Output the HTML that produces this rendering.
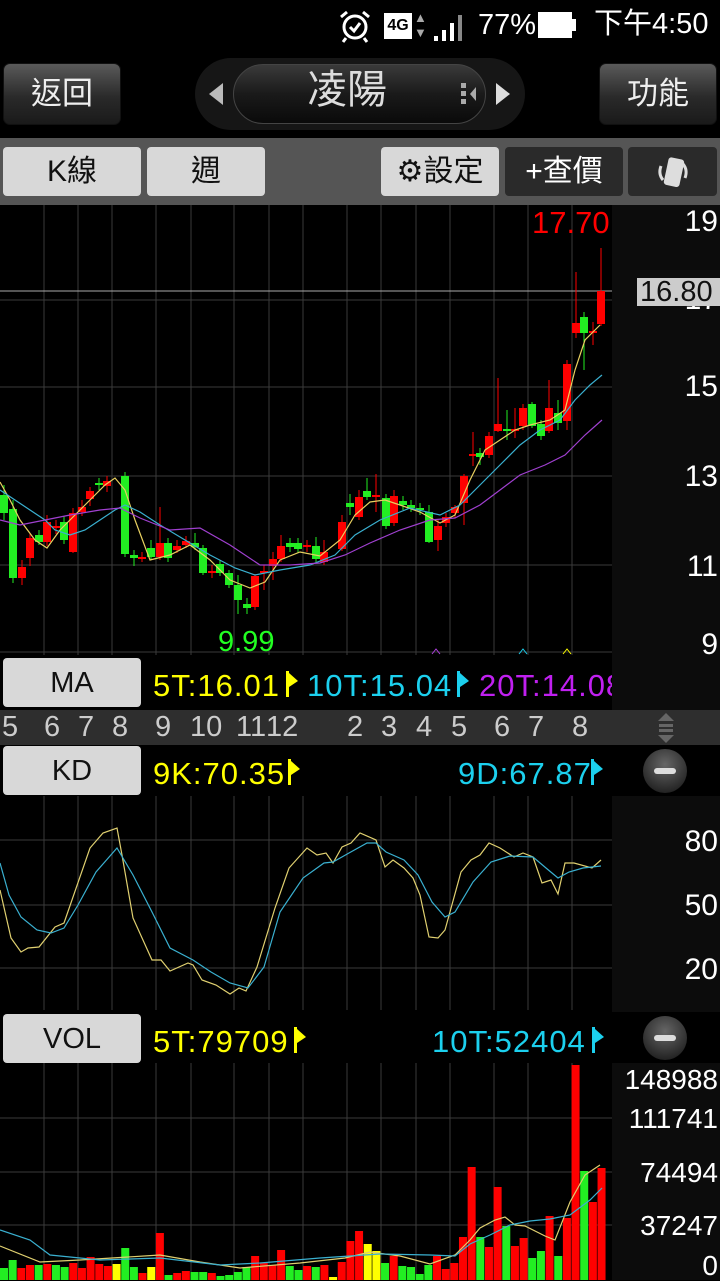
<!DOCTYPE html>
<html><head><meta charset="utf-8">
<style>
*{margin:0;padding:0;box-sizing:border-box}
body{width:720px;height:1280px;background:#000;position:relative;overflow:hidden;font-family:"Liberation Sans","Noto Sans CJK TC",sans-serif;color:#fff}
.abs{position:absolute}
.hbtn{position:absolute;top:63px;height:62px;width:118px;border-radius:7px;background:linear-gradient(#5a5a5a,#2a2a2a 55%,#1a1a1a);border:1px solid #111;color:#eee;font-size:31px;text-align:center;line-height:60px}
.tb{position:absolute;top:147px;height:49px;border-radius:4px;font-size:30px;text-align:center;line-height:49px}
.lt{background:#d8d8d8;color:#111}
.dk{background:#2a2a2a;color:#fff}
.lbl{position:absolute;left:3px;width:138px;height:49px;border-radius:4px;background:#d8d8d8;color:#111;font-size:29px;text-align:center;line-height:50px}
.t{position:absolute;font-size:31px;letter-spacing:1px;white-space:nowrap;line-height:1}
.ax{position:absolute;right:2px;font-size:30px;color:#fff;text-align:right;line-height:1}
.minus{position:absolute;left:643px;width:44px;height:44px;border-radius:50%;background:radial-gradient(circle at 50% 35%,#666,#2a2a2a 70%,#111)}
.minus:after{content:"";position:absolute;left:11px;top:19px;width:22px;height:6px;border-radius:3px;background:#ddd}
.flag{position:absolute;width:14px;height:26px}
</style></head><body>
<!-- status bar -->
<div class="abs" style="left:337px;top:8px;width:36px;height:36px">
<svg width="36" height="36" viewBox="0 0 36 36" fill="none" stroke="#fff" stroke-width="3"><circle cx="18" cy="19" r="11"/><path d="M13 19l4 4 6-8"/><path d="M4 9l6-5M32 9l-6-5M9 30l-3 4M27 30l3 4"/></svg></div>
<div class="abs" style="left:384px;top:13px;width:28px;height:26px;background:#fff;color:#000;font-size:16px;font-weight:bold;text-align:center;line-height:26px">4G</div>
<div class="abs" style="left:414px;top:10px;font-size:13px;color:#aaa;line-height:15px">▲<br>▼</div>
<svg class="abs" style="left:432px;top:12px" width="36" height="30"><rect x="2" y="24" width="4" height="5" fill="#fff"/><rect x="10" y="18" width="4" height="11" fill="#fff"/><rect x="18" y="11" width="4" height="18" fill="#fff"/><rect x="26" y="3" width="4" height="26" fill="#888"/></svg>
<div class="t" style="left:478px;top:11px;font-size:29px;letter-spacing:0;color:#fff">77%</div>
<div class="abs" style="left:538px;top:12px;width:34px;height:26px;background:#fff"></div>
<div class="abs" style="left:572px;top:19px;width:4px;height:12px;background:#fff"></div>
<div class="t" style="left:594px;top:10px;font-size:29px;letter-spacing:0">下午4:50</div>
<!-- header -->
<div class="hbtn" style="left:3px">返回</div>
<div class="hbtn" style="left:599px">功能</div>
<div class="abs" style="left:195px;top:58px;width:330px;height:72px;border-radius:36px;background:#161616"></div>
<div class="abs" style="left:233px;top:64px;width:253px;height:60px;border-radius:30px;background:linear-gradient(#3a3a3a,#1a1a1a 50%,#0a0a0a);border:1px solid #444"></div>
<div class="t" style="left:307px;top:70px;font-size:40px;letter-spacing:0;color:#ddd">凌陽</div>
<svg class="abs" style="left:205px;top:80px" width="22" height="28"><path d="M18 3L4 14l14 11z" fill="#bbb"/></svg>
<svg class="abs" style="left:492px;top:80px" width="22" height="28"><path d="M4 3l14 11L4 25z" fill="#ddd"/></svg>
<svg class="abs" style="left:458px;top:80px" width="22" height="28"><rect x="3" y="3" width="5" height="5" fill="#aaa"/><rect x="3" y="11" width="5" height="5" fill="#aaa"/><rect x="3" y="19" width="5" height="5" fill="#aaa"/><path d="M18 7l-6 7 6 7z" fill="#aaa"/></svg>
<!-- toolbar -->
<div class="abs" style="left:0;top:138px;width:720px;height:67px;background:#555"></div>
<div class="tb lt" style="left:3px;width:138px">K線</div>
<div class="tb lt" style="left:147px;width:118px">週</div>
<div class="tb lt" style="left:381px;width:118px">⚙設定</div>
<div class="tb dk" style="left:505px;width:118px">+查價</div>
<div class="tb dk" style="left:628px;width:89px"><svg width="40" height="40" viewBox="0 0 40 40" style="margin-top:5px"><rect x="13" y="6" width="16" height="28" rx="3" fill="#ddd" transform="rotate(12 20 20)"/><path d="M8 14q-3 8 2 14M32 26q3-8-2-14" stroke="#ddd" stroke-width="3" fill="none"/></svg></div>
<!-- right axis bg -->
<div class="abs" style="left:612px;top:205px;width:108px;height:505px;background:#0c0c0c"></div>
<div class="abs" style="left:612px;top:796px;width:108px;height:216px;background:#0c0c0c"></div>
<div class="abs" style="left:612px;top:1063px;width:108px;height:217px;background:#0c0c0c"></div>
<svg id="main" class="abs" style="left:0;top:0" width="720" height="1280"></svg>
<!-- price labels -->
<div class="t" style="left:532px;top:207px;font-size:31px;letter-spacing:0;color:#f00">17.70</div>
<div class="t" style="left:218px;top:628px;font-size:29px;letter-spacing:0;color:#2f2">9.99</div>
<div class="ax" style="top:207px">19</div>
<div class="ax" style="top:285px">17</div>
<div class="abs" style="left:637px;top:278px;width:83px;height:28px;background:#ccc"></div>
<div class="t" style="left:640px;top:278px;font-size:29px;letter-spacing:0;color:#111">16.80</div>
<div class="ax" style="top:372px">15</div>
<div class="ax" style="top:462px">13</div>
<div class="ax" style="top:552px">11</div>
<div class="ax" style="top:630px">9</div>
<!-- MA row -->
<div class="lbl" style="top:658px">MA</div>
<div class="t" style="left:153px;top:670px;color:#ff0">5T:16.01</div>
<svg class="flag" style="left:285px;top:671px"><path d="M1 0h3v26H1zM4 2l9 8-9 6z" fill="#ff0"/></svg>
<div class="t" style="left:307px;top:670px;color:#1cd0ee">10T:15.04</div>
<svg class="flag" style="left:456px;top:671px"><path d="M1 0h3v26H1zM4 2l9 8-9 6z" fill="#1cd0ee"/></svg>
<div class="t" style="left:479px;top:670px;color:#c020f0;width:133px;overflow:hidden">20T:14.08</div>
<!-- month axis -->
<div class="abs" style="left:0;top:710px;width:720px;height:35px;background:#2e2e2e"></div>
<div class="t" style="left:0;top:713px;font-size:29px;letter-spacing:0;color:#ccc">
<span class="abs" style="left:2px">5</span><span class="abs" style="left:44px">6</span><span class="abs" style="left:78px">7</span><span class="abs" style="left:112px">8</span><span class="abs" style="left:155px">9</span><span class="abs" style="left:190px">10</span><span class="abs" style="left:236px">11</span><span class="abs" style="left:266px">12</span><span class="abs" style="left:347px">2</span><span class="abs" style="left:381px">3</span><span class="abs" style="left:416px">4</span><span class="abs" style="left:451px">5</span><span class="abs" style="left:494px">6</span><span class="abs" style="left:528px">7</span><span class="abs" style="left:572px">8</span></div>
<svg class="abs" style="left:654px;top:711px" width="24" height="34"><path d="M12 2l8 8H4z" fill="#666"/><rect x="5" y="13" width="14" height="3" fill="#666"/><rect x="5" y="18" width="14" height="3" fill="#666"/><path d="M12 32l8-8H4z" fill="#666"/></svg>
<!-- KD row -->
<div class="lbl" style="top:746px">KD</div>
<div class="t" style="left:153px;top:758px;color:#ff0">9K:70.35</div>
<svg class="flag" style="left:287px;top:759px"><path d="M1 0h3v26H1zM4 2l9 8-9 6z" fill="#ff0"/></svg>
<div class="t" style="left:458px;top:758px;color:#1cd0ee">9D:67.87</div>
<svg class="flag" style="left:590px;top:759px"><path d="M1 0h3v26H1zM4 2l9 8-9 6z" fill="#1cd0ee"/></svg>
<div class="minus" style="top:749px"></div>
<div class="ax" style="top:827px">80</div>
<div class="ax" style="top:891px">50</div>
<div class="ax" style="top:955px">20</div>
<!-- VOL row -->
<div class="lbl" style="top:1014px">VOL</div>
<div class="t" style="left:153px;top:1026px;color:#ff0">5T:79709</div>
<svg class="flag" style="left:293px;top:1027px"><path d="M1 0h3v26H1zM4 2l9 8-9 6z" fill="#ff0"/></svg>
<div class="t" style="left:432px;top:1026px;color:#1cd0ee">10T:52404</div>
<svg class="flag" style="left:591px;top:1027px"><path d="M1 0h3v26H1zM4 2l9 8-9 6z" fill="#1cd0ee"/></svg>
<div class="minus" style="top:1016px"></div>
<div class="ax" style="top:1066px;font-size:28px">148988</div>
<div class="ax" style="top:1105px;font-size:28px">111741</div>
<div class="ax" style="top:1159px;font-size:28px">74494</div>
<div class="ax" style="top:1212px;font-size:28px">37247</div>
<div class="ax" style="top:1252px;font-size:28px">0</div>
<script>
var s=document.getElementById('main'),h='';
function L(x1,y1,x2,y2,c,w){h+='<line x1="'+x1+'" y1="'+y1+'" x2="'+x2+'" y2="'+y2+'" stroke="'+c+'" stroke-width="'+(w||1)+'"/>';}
function R(x,y,w,hh,c){h+='<rect x="'+x+'" y="'+y+'" width="'+w+'" height="'+Math.max(hh,1.5)+'" fill="'+c+'"/>';}
function P(pts,c){h+='<polyline fill="none" stroke="'+c+'" stroke-width="1.2" points="'+pts+'"/>';}
var vx=[44,78,112,156,191,234,269,303,347,381,416,450,494,528,572],g='#3a3a3a';
vx.forEach(function(x){L(x,205,x,655,g);L(x,796,x,1010,g);L(x,1063,x,1280,g);});
[300,387,476,565,652].forEach(function(y){L(0,y,612,y,g);});
L(0,291,612,291,'#aaa');
[840,905,968].forEach(function(y){L(0,y,612,y,g);});
[1118,1172,1225].forEach(function(y){L(0,y,612,y,g);});
var G='#22ee22',Rd='#ff0000',Y='#ffff00';
var c=[[4,495,513,'g',485,520],[13,509,578,'g',500,583],[22,567,578,'r',560,585],[30,538,558,'r',533,566],[39,535,542,'g',530,545],[47,522,542,'r',515,546],[56,526,528,'r',520,534],[64,522,540,'g',516,544],[73,513,552,'r',508,553],[82,507,512,'r',500,516],[90,491,499,'r',487,506],[99,483,485,'g',478,490],[107,481,486,'r',476,492],[125,476,554,'g',472,557],[134,555,558,'g',550,566],[142,557,559,'r',552,562],[151,548,557,'g',540,560],[160,543,557,'r',507,560],[168,543,558,'g',538,562],[177,546,550,'r',540,553],[186,541,545,'r',536,548],[195,543,547,'g',533,550],[203,548,573,'g',545,575],[212,571,573,'r',565,578],[220,564,573,'g',560,576],[229,573,585,'g',570,588],[238,585,600,'g',575,614],[247,604,608,'g',598,614],[255,576,607,'r',574,610],[264,571,573,'r',565,590],[273,559,566,'r',552,580],[281,546,559,'r',535,562],[290,543,547,'g',538,552],[298,543,549,'g',538,553],[307,545,547,'r',540,552],[316,546,559,'g',537,562],[324,552,562,'r',540,565],[342,522,549,'r',515,551],[350,503,507,'g',494,515],[359,497,517,'r',490,520],[367,491,497,'g',478,500],[376,495,497,'r',474,512],[386,498,526,'g',494,529],[394,496,523,'r',490,526],[403,501,505,'g',496,510],[411,505,508,'g',500,512],[420,508,510,'g',503,515],[429,512,542,'g',505,543],[438,526,540,'r',520,551],[446,517,523,'r',513,527],[455,507,513,'r',505,518],[464,476,503,'r',474,525],[473,454,456,'r',432,466],[480,453,457,'g',448,465],[489,436,455,'r',432,458],[498,424,431,'r',378,432],[507,429,431,'g',410,440],[515,429,431,'r',408,438],[523,408,426,'r',404,430],[532,404,426,'g',402,428],[541,424,436,'g',420,440],[549,408,431,'r',380,433],[558,413,423,'g',400,430],[567,364,421,'r',360,430],[576,323,333,'r',272,338],[584,317,333,'g',312,370],[593,331,333,'r',322,345],[601,291,324,'r',248,326]];
c.forEach(function(a){var col=a[3]=='g'?G:Rd;L(a[0],a[4],a[0],a[5],col);R(a[0]-4,a[1],8,a[2]-a[1],col);});
P('0,482 10,500 20,520 35,540 47,548 60,530 75,515 90,500 105,485 115,478 125,490 135,520 150,560 170,555 190,545 210,560 230,580 250,588 265,582 280,560 300,552 320,556 340,540 355,515 370,502 385,500 400,505 420,512 440,523 455,515 470,480 485,450 500,440 515,430 530,425 550,420 565,410 575,370 585,340 600,325','#e8d060');
P('0,490 15,500 30,510 45,520 55,530 70,535 85,530 100,520 115,510 125,505 140,512 160,525 185,540 210,555 235,568 255,575 280,570 310,565 335,555 355,535 380,520 410,508 440,515 460,505 480,485 500,465 520,445 540,430 560,420 575,400 590,385 602,375','#3ab0d0');
P('0,520 20,525 45,520 70,515 100,510 120,508 140,518 170,530 200,528 230,545 260,565 290,565 320,563 345,555 370,543 400,530 430,520 455,518 480,505 500,490 520,475 545,465 565,455 585,435 602,420','#a040d0');
h+='<path d="M432 654l4-5 4 5" stroke="#b040e0" fill="none"/><path d="M519 654l4-5 4 5" stroke="#1cd0ee" fill="none"/><path d="M563 654l4-5 4 5" stroke="#ff0" fill="none"/>';
P('0,890 11,938 21,952 28,948 39,947 55,927 64,923 90,848 103,833 117,828 122,855 133,918 152,960 161,960 170,971 188,963 193,965 202,980 216,985 230,994 239,988 246,991 257,967 275,908 289,868 307,848 317,855 326,853 333,863 342,847 351,843 360,833 376,840 385,867 393,860 404,868 413,878 420,895 429,937 438,938 445,930 461,872 471,860 480,855 489,843 500,848 514,857 523,853 533,857 542,883 551,880 558,894 565,863 574,863 592,868 601,860','#e0d070');
P('0,863 9,895 21,917 37,930 51,933 64,928 78,905 96,872 117,848 133,875 152,912 170,948 193,960 211,972 230,983 248,988 264,967 280,912 303,878 324,863 333,862 349,853 367,843 376,843 386,852 404,860 418,875 432,902 445,917 455,912 473,882 491,862 510,856 533,857 546,868 558,878 569,872 583,868 601,866','#3ab0d0');
var v=[['g',1268],['g',1260],['r',1268],['r',1265],['g',1265],['r',1264],['g',1265],['g',1267],['r',1263],['r',1268],['r',1257],['r',1264],['r',1266],['y',1264],['g',1248],['g',1267],['r',1273],['y',1267],['r',1233],['g',1275],['r',1273],['r',1271],['g',1272],['g',1272],['r',1273],['g',1276],['g',1275],['g',1272],['g',1267],['r',1256],['r',1263],['r',1265],['r',1250],['g',1266],['g',1270],['r',1266],['g',1267],['r',1265],['y',1277],['r',1262],['r',1241],['r',1231],['y',1244],['y',1251],['g',1263],['r',1256],['g',1266],['g',1267],['g',1274],['g',1265],['r',1256],['r',1269],['r',1263],['r',1237],['r',1167],['g',1237],['r',1247],['r',1187],['g',1226],['r',1246],['r',1238],['g',1258],['g',1251],['r',1216],['g',1256],['r',1218],['r',1065],['g',1171],['r',1202],['r',1168]];
v.forEach(function(a,i){var x=4+i*8.66;R(x-4,a[1],8,1280-a[1],a[0]=='g'?G:a[0]=='y'?Y:Rd);});
P('0,1246 40,1262 80,1260 160,1255 200,1262 240,1268 300,1263 345,1258 370,1252 400,1256 430,1264 455,1255 470,1240 480,1228 495,1220 505,1217 515,1225 525,1226 545,1236 555,1240 570,1202 585,1175 600,1165','#e0d070');
P('0,1230 30,1240 50,1255 100,1260 160,1258 220,1265 260,1263 320,1258 380,1254 430,1255 455,1256 470,1244 490,1235 510,1225 530,1221 550,1219 570,1215 590,1200 602,1188','#3ab0d0');
s.innerHTML=h;
</script>
</body></html>
